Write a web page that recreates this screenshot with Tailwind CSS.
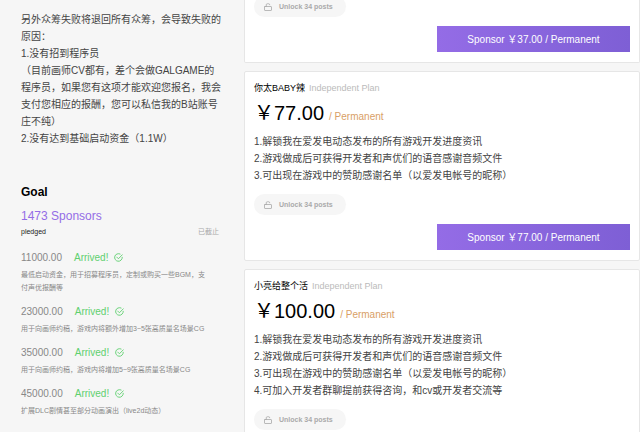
<!DOCTYPE html>
<html lang="zh-CN">
<head>
  <meta charset="utf-8" />
  <meta name="viewport" content="width=device-width, initial-scale=1.0" />
  <title>Sponsor plans</title>
  <script src="https://cdn.jsdelivr.net/npm/@tailwindcss/browser@4"></script>
</head>
<body class="h-screen overflow-hidden bg-[#f6f6f6] font-['Liberation_Sans','Noto_Sans_CJK_SC',sans-serif] text-[10px] leading-[17px] text-[#444]">
  <!-- shared icons -->
  <svg class="hidden">
    <symbol id="icon-check" viewBox="0 0 20 20" fill="none" stroke="currentColor" stroke-width="2" stroke-linecap="round" stroke-linejoin="round">
      <path d="M18.4 9.6A8.5 8.5 0 1 1 13.6 2.2" />
      <path d="M6 9l3.8 3.8L18.4 4" />
    </symbol>
    <symbol id="icon-lock" viewBox="0 0 16 16" fill="none" stroke="currentColor" stroke-width="1.6" stroke-linecap="round" stroke-linejoin="round">
      <rect x="1" y="7" width="14" height="8" rx="1" />
      <path d="M4.5 7V3.5a2 2 0 0 1 2-2h3a2 2 0 0 1 2 2" />
    </symbol>
  </svg>

  <div class="flex items-start">
    <!-- sidebar -->
    <aside class="w-[244px] shrink-0 pt-[11px] pr-[23px] pl-[21px]">
      <p>
        另外众筹失败将退回所有众筹，会导致失败的原因：<br />
        1.没有招到程序员<br />
        （目前画师CV都有，差个会做GALGAME的程序员，如果您有这项才能欢迎您报名，我会支付您相应的报酬，您可以私信我的B站账号庄不纯）<br />
        2.没有达到基础启动资金（1.1W）
      </p>

      <h2 class="mt-9 text-[12px] leading-[18px] font-bold text-black">Goal</h2>
      <div class="mt-[6px] text-[12px] leading-[18px] text-[#946ce6]">1473 Sponsors</div>
      <div class="flex justify-between pr-[2px] text-[7px] leading-[13px]">
        <span class="text-[#222]">pledged</span>
        <span class="text-[#aaa]">已截止</span>
      </div>

      <ul class="mt-3 flex flex-col gap-[10px]">
        <li>
          <div class="flex items-center leading-[15px]">
            <span class="text-[#888]">11000.00</span>
            <span class="ml-3 text-[#5fd06f]">Arrived!</span>
            <svg class="ml-[6px] size-[9px] text-[#5fd06f]"><use href="#icon-check" /></svg>
          </div>
          <p class="mt-[3px] text-[7px] leading-[13px] text-[#888]">最低启动资金，用于招募程序员，定制或购买一些BGM，支<br />付声优报酬等</p>
        </li>
        <li>
          <div class="flex items-center leading-[15px]">
            <span class="text-[#888]">23000.00</span>
            <span class="ml-3 text-[#5fd06f]">Arrived!</span>
            <svg class="ml-[6px] size-[9px] text-[#5fd06f]"><use href="#icon-check" /></svg>
          </div>
          <p class="mt-[3px] text-[7px] leading-[13px] text-[#888]">用于向画师约稿，游戏内将额外增加3~5张高质量名场景CG</p>
        </li>
        <li>
          <div class="flex items-center leading-[15px]">
            <span class="text-[#888]">35000.00</span>
            <span class="ml-3 text-[#5fd06f]">Arrived!</span>
            <svg class="ml-[6px] size-[9px] text-[#5fd06f]"><use href="#icon-check" /></svg>
          </div>
          <p class="mt-[3px] text-[7px] leading-[13px] text-[#888]">用于向画师约稿，游戏内将增加5~9张高质量名场景CG</p>
        </li>
        <li>
          <div class="flex items-center leading-[15px]">
            <span class="text-[#888]">45000.00</span>
            <span class="ml-3 text-[#5fd06f]">Arrived!</span>
            <svg class="ml-[6px] size-[9px] text-[#5fd06f]"><use href="#icon-check" /></svg>
          </div>
          <p class="mt-[3px] text-[7px] leading-[13px] text-[#888]">扩展DLC剧情甚至部分动画演出（live2d动态）</p>
        </li>
      </ul>
    </aside>

    <!-- plans -->
    <main class="-mt-1 flex min-w-0 flex-1 flex-col gap-2">
      <section class="flex flex-col items-start rounded-b-xs border border-t-0 border-[#e6e6e6] bg-white px-[9px] pb-[10px]">
        <div class="flex h-[21px] items-center rounded-full bg-[#f6f6f6] pr-[13px] pl-[10px] text-[7px] font-bold text-[#aaa]">
          <svg class="mr-[7px] size-2"><use href="#icon-lock" /></svg>
          Unlock 34 posts
        </div>
        <button class="mt-[9px] h-[26px] w-[193px] self-end bg-linear-to-r from-[#946ce6] to-[#7e5fd5] text-white">Sponsor ￥37.00 / Permanent</button>
      </section>

      <section class="flex flex-col items-start rounded-xs border border-[#e6e6e6] bg-white px-[9px] pt-[9px] pb-[10px]">
        <div class="flex gap-1 text-[9px] leading-[14px]">
          <span class="text-black">你太BABY辣</span>
          <span class="text-[#bbb]">Independent Plan</span>
        </div>
        <div class="mt-[5px] flex h-[26px] items-baseline gap-[5px] text-[20px] leading-[26px] text-black">￥77.00 <span class="text-[10px] text-[#d9a066]">/ Permanent</span></div>
        <p class="mt-[7px]">
          1.解锁我在爱发电动态发布的所有游戏开发进度资讯<br />
          2.游戏做成后可获得开发者和声优们的语音感谢音频文件<br />
          3.可出现在游戏中的赞助感谢名单（以爱发电帐号的昵称）
        </p>
        <div class="mt-[10px] flex h-[21px] items-center rounded-full bg-[#f6f6f6] pr-[13px] pl-[10px] text-[7px] font-bold text-[#aaa]">
          <svg class="mr-[7px] size-2"><use href="#icon-lock" /></svg>
          Unlock 34 posts
        </div>
        <button class="mt-[9px] h-[26px] w-[193px] self-end bg-linear-to-r from-[#946ce6] to-[#7e5fd5] text-white">Sponsor ￥77.00 / Permanent</button>
      </section>

      <section class="flex flex-col items-start rounded-xs border border-[#e6e6e6] bg-white px-[9px] pt-[9px] pb-[10px]">
        <div class="flex gap-1 text-[9px] leading-[14px]">
          <span class="text-black">小亮给整个活</span>
          <span class="text-[#bbb]">Independent Plan</span>
        </div>
        <div class="mt-[5px] flex h-[26px] items-baseline gap-[5px] text-[20px] leading-[26px] text-black">￥100.00 <span class="text-[10px] text-[#d9a066]">/ Permanent</span></div>
        <p class="mt-[7px]">
          1.解锁我在爱发电动态发布的所有游戏开发进度资讯<br />
          2.游戏做成后可获得开发者和声优们的语音感谢音频文件<br />
          3.可出现在游戏中的赞助感谢名单（以爱发电帐号的昵称）<br />
          4.可加入开发者群聊提前获得咨询，和cv或开发者交流等
        </p>
        <div class="mt-[10px] flex h-[21px] items-center rounded-full bg-[#f6f6f6] pr-[13px] pl-[10px] text-[7px] font-bold text-[#aaa]">
          <svg class="mr-[7px] size-2"><use href="#icon-lock" /></svg>
          Unlock 34 posts
        </div>
      </section>
    </main>
  </div>
</body>
</html>
